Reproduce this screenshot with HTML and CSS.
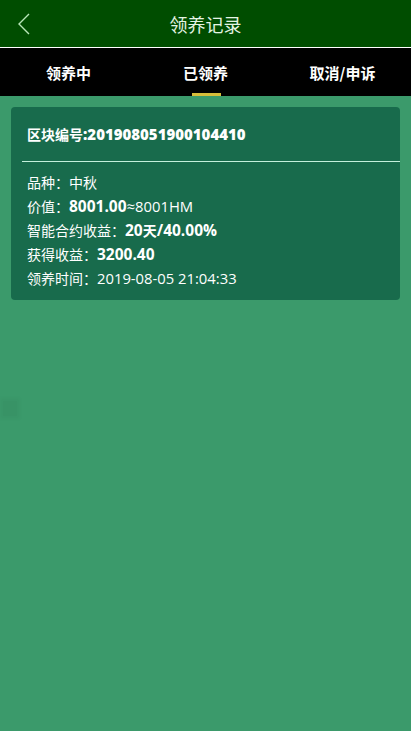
FILE: index.html
```html
<!DOCTYPE html>
<html lang="zh">
<head>
<meta charset="utf-8">
<title>领养记录</title>
<link rel="stylesheet" href="styles.css">
</head>
<body>
<header class="topbar">
  <svg class="back" width="14" height="22" viewBox="0 0 14 22"><polyline points="12,1 2,11 12,21" fill="none" stroke="#b8e6b8" stroke-width="1.4"/></svg>
  <h1 class="title">领养记录</h1>
</header>
<nav class="tabs">
  <div class="tab">领养中</div>
  <div class="tab active">已领养</div>
  <div class="tab">取消/申诉</div>
</nav>
<main class="content">
  <section class="card">
    <div class="card-head">区块编号<b>:201908051900104410</b></div>
    <div class="divider"></div>
    <div class="rows">
      <div class="row">品种：中秋</div>
      <div class="row">价值：<b>8001.00</b><span class="num">≈8001HM</span></div>
      <div class="row">智能合约收益：<b>20</b><b class="cjk">天</b><b>/40.00%</b></div>
      <div class="row">获得收益：<b>3200.40</b></div>
      <div class="row">领养时间：<span class="num">2019-08-05 21:04:33</span></div>
    </div>
  </section>
</main>
<div class="ghost"></div>
</body>
</html>
```
FILE: styles.css
```css
html, body {
  margin: 0;
  padding: 0;
}
body {
  background: #3b9a6b;
  font-family: "Open Sans", "Noto Sans CJK SC", sans-serif;
  color: #fff;
  height: 731px;
}
.topbar {
  height: 47px;
  background: #004d00;
  border-bottom: 1px solid #ffffff;
  display: flex;
  align-items: center;
  justify-content: center;
  position: relative;
}
.back {
  position: absolute;
  left: 17px;
  top: 13px;
}
.title {
  margin: 0;
  font-size: 18px;
  font-weight: normal;
  color: #e4f4e4;
  font-family: "Noto Sans CJK SC", sans-serif;
}
.tabs {
  height: 48px;
  background: #000;
  display: grid;
  grid-template-columns: 1fr 1fr 1fr;
}
.tab {
  display: flex;
  align-items: center;
  justify-content: center;
  font-size: 15px;
  font-weight: bold;
  font-family: "Noto Sans CJK SC", sans-serif;
  position: relative;
}
.tab.active::after {
  content: "";
  position: absolute;
  bottom: 0;
  left: 50%;
  margin-left: -14px;
  width: 29px;
  height: 3px;
  background: #d6bd3a;
}
.content {
  padding: 11px 11px 0 11px;
}
.card {
  background: #186b4c;
  border-radius: 4px;
  padding-bottom: 10px;
}
.card-head {
  line-height: 54px;
  height: 54px;
  padding-left: 16px;
  font-size: 14px;
  font-weight: bold;
  font-family: "Noto Sans CJK SC", sans-serif;
}
.card-head b {
  font-family: "Open Sans", sans-serif;
  font-size: 15px;
  line-height: 1;
}
.divider {
  margin-left: 11px;
  height: 1px;
  background: #c4f0dc;
}
.rows {
  padding: 8px 0 0 16px;
}
.row {
  font-size: 14px;
  line-height: 24px;
  height: 24px;
  font-family: "Noto Sans CJK SC", sans-serif;
  white-space: nowrap;
}
.row b {
  font-weight: bold;
  font-size: 15.5px;
  line-height: 1;
  font-family: "Open Sans", sans-serif;
}
.row b.cjk {
  font-family: "Noto Sans CJK SC", sans-serif;
  font-size: 14px;
}
.num {
  font-family: "Open Sans", sans-serif;
  font-size: 14.8px;
  line-height: 1;
}
.ghost {
  position: absolute;
  left: 3px;
  top: 401px;
  width: 14px;
  height: 15px;
  background: rgba(0, 0, 0, 0.04);
  box-shadow: 0 0 4px 3px rgba(0, 0, 0, 0.03);
}
```
